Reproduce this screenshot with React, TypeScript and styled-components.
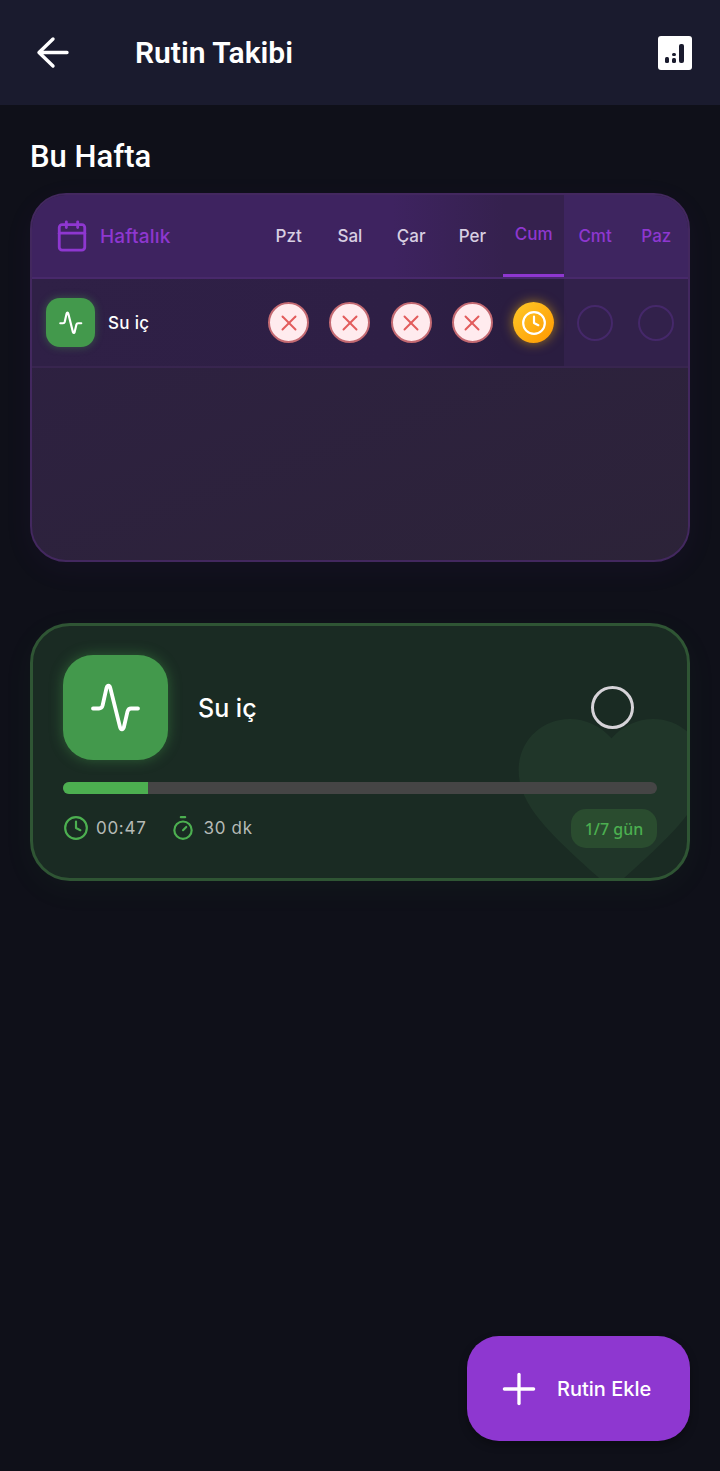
import * as React from 'react';
import styled, { createGlobalStyle } from 'styled-components';
import { Calendar, Clock, Plus, Timer, X } from 'lucide-react';

const GlobalStyle = createGlobalStyle`
  html, body { margin: 0; padding: 0; background: #0f1019; }
  * { box-sizing: border-box; }
`;

const Page = styled.div`
  position: relative;
  min-height: 100vh;
  display: flex;
  flex-direction: column;
  background: #0f1019;
  font-family: Inter, 'Liberation Sans', sans-serif;
  color: #fff;
  overflow: hidden;
`;

const Header = styled.header`
  height: 105px;
  flex-shrink: 0;
  display: flex;
  align-items: center;
  padding: 0 28px 0 36px;
  background: #1a1b2e;
`;

const BackButton = styled.div`
  width: 33px;
  height: 33px;
  display: flex;
  margin-right: 66px;
`;

const Title = styled.h1`
  flex: 1;
  margin: 0;
  font: 600 30px Roboto, sans-serif;
`;

const Main = styled.main`
  padding: 33px 30px 0;
`;

const SectionTitle = styled.h2`
  margin: 0 0 18px;
  height: 37px;
  font: 500 31px/37px Roboto, sans-serif;
`;

const WeekCard = styled.section`
  height: 369px;
  border: 2px solid #43285f;
  border-radius: 36px;
  overflow: hidden;
  background: linear-gradient(160deg, #2e2044 0%, #2c2338 100%);
  box-shadow: 0 8px 32px rgba(142, 55, 208, 0.05);
`;

// the stop at 81.1% is the right edge of today's column
const WeekGrid = styled.div<{ $head?: boolean }>`
  display: grid;
  grid-template-columns: 1fr repeat(7, 61.3px);
  padding-right: 1px;
  height: ${p => (p.$head ? '84px' : '89px')};
  background: ${p =>
    p.$head
      ? 'linear-gradient(90deg, #3e2360 0%, #3e2360 55%, #35214e 72%, #35214e 81.1%, #3e2560 81.1%)'
      : 'linear-gradient(90deg, #2f2046 0%, #2e1f45 55%, #2a1d40 72%, #2a1d40 81.1%, #32214b 81.1%)'};
  border-bottom: 2px solid ${p => (p.$head ? '#48296b' : '#38254f')};
`;

const WeekLabel = styled.div`
  display: flex;
  align-items: center;
  gap: 11px;
  padding-left: 23px;
  font-size: 19px;
  font-weight: 500;
  letter-spacing: 0.2px;
  color: #8e37d0;
`;

const RoutineLabel = styled.div`
  display: flex;
  align-items: center;
  gap: 13px;
  padding-left: 14px;
  font-size: 17px;
  font-weight: 500;
  letter-spacing: 0.3px;
`;

const DayHead = styled.div<{ $today?: boolean; $future?: boolean }>`
  display: flex;
  align-items: center;
  justify-content: center;
  font-size: 17px;
  font-weight: 500;
  padding-bottom: ${p => (p.$today ? '1px' : '0')};
  color: ${p => (p.$today || p.$future ? '#8e37d0' : '#d8cfe2')};
  border-bottom: ${p => (p.$today ? '3px solid #8e37d0' : '0')};
`;

const DayCell = styled.div`
  display: flex;
  align-items: center;
  justify-content: center;
`;

const MissedDot = styled.div`
  width: 41px;
  height: 41px;
  border-radius: 50%;
  display: flex;
  align-items: center;
  justify-content: center;
  background: #ffebee;
  border: 2px solid #c46a72;
  color: #e25c5c;
`;

const PendingDot = styled.div`
  width: 41px;
  height: 41px;
  border-radius: 50%;
  display: flex;
  align-items: center;
  justify-content: center;
  background: linear-gradient(135deg, #ffca28, #ff9800);
  box-shadow: 0 0 12px rgba(255, 193, 7, 0.55);
  color: #fff;
`;

const EmptyDot = styled.div`
  width: 36px;
  height: 36px;
  border-radius: 50%;
  border: 2.5px solid #45286a;
`;

const IconTile = styled.div<{ $big?: boolean }>`
  width: ${p => (p.$big ? '105px' : '49px')};
  height: ${p => (p.$big ? '105px' : '49px')};
  border-radius: ${p => (p.$big ? '30px' : '14px')};
  flex-shrink: 0;
  display: flex;
  align-items: center;
  justify-content: center;
  background: #43994c;
  box-shadow: 0 0 ${p => (p.$big ? '14px' : '8px')} rgba(76, 175, 80, 0.4);
`;

const RoutineCard = styled.section`
  position: relative;
  margin-top: 61px;
  height: 258px;
  padding: 29px 30px 0;
  border: 3px solid #2f5534;
  border-radius: 40px;
  overflow: hidden;
  background: #1a2b23;
  box-shadow: 0 8px 32px rgba(76, 175, 80, 0.05);
`;

const HeartMark = styled.svg`
  position: absolute;
  left: 467px;
  top: 65px;
  width: 223px;
  height: 223px;
  color: #203629;
`;

const RoutineTop = styled.div`
  position: relative;
  display: flex;
  align-items: center;
  height: 105px;
`;

const RoutineName = styled.div`
  flex: 1;
  margin-left: 30px;
  font-size: 25px;
  font-weight: 500;
`;

const StatusRing = styled.div`
  width: 43px;
  height: 43px;
  margin-right: 23px;
  border: 3px solid #d6d3d8;
  border-radius: 50%;
`;

const Track = styled.div`
  position: relative;
  height: 12px;
  margin-top: 22px;
  border-radius: 6px;
  overflow: hidden;
  background: #454545;
`;

const Fill = styled.div`
  height: 100%;
  background: #4caf50;
`;

const StatsRow = styled.div`
  position: relative;
  display: flex;
  align-items: center;
  margin-top: 15px;
  height: 39px;
`;

const Stat = styled.div`
  display: flex;
  align-items: center;
  gap: 7px;
  margin-right: 24px;
  padding-bottom: 1px;
  font-size: 17px;
  letter-spacing: 0.7px;
  color: #b5bab6;
  svg { color: #4caf50; }
`;

const Badge = styled.div`
  margin-left: auto;
  width: 86px;
  height: 39px;
  display: flex;
  align-items: center;
  justify-content: center;
  border-radius: 15px;
  background: #2a4c2f;
  color: #4caf50;
  font: 500 16px 'Noto Sans', sans-serif;
`;

const Fab = styled.button`
  position: absolute;
  right: 30px;
  bottom: 30px;
  width: 223px;
  height: 105px;
  display: flex;
  align-items: center;
  gap: 13px;
  padding: 0 0 0 27px;
  border: 0;
  border-radius: 32px;
  background: #8e37d0;
  color: #fff;
  font-family: Inter, sans-serif;
  font-size: 20px;
  font-weight: 500;
  box-shadow: 0 4px 8px rgba(0, 0, 0, 0.3);
`;

function Pulse({ size, weight }: { size: number; weight: number }) {
  return (
    <svg width={size} height={size} viewBox="0 0 60 60" fill="none" stroke="#fff" strokeWidth={weight} strokeLinecap="round" strokeLinejoin="round">
      <path d="M7 30.5h6c2 0 3-1 3.6-3L20.5 10c.9-3 3-3 3.8 0L34 49c.8 3 3 3 3.8.5l3.7-16c.6-2 1.6-3 3.5-3H52" />
    </svg>
  );
}

function StatsIcon() {
  return (
    <svg width="34" height="34" viewBox="0 0 34 34">
      <rect width="34" height="34" rx="3" fill="#fff" />
      <rect x="7" y="21" width="4" height="6" rx="1.5" fill="#1a1b2e" />
      <rect x="14" y="17" width="4" height="3" rx="1.5" fill="#1a1b2e" />
      <rect x="14" y="22" width="4" height="5" rx="1.5" fill="#1a1b2e" />
      <rect x="21" y="8" width="5" height="19" rx="2" fill="#1a1b2e" />
    </svg>
  );
}

const DAYS = ['Pzt', 'Sal', 'Çar', 'Per', 'Cum', 'Cmt', 'Paz'];
const TODAY = 4;

export default function App() {
  return (
    <Page>
      <GlobalStyle />
      <Header>
        <BackButton>
          <svg width="33" height="33" viewBox="0 0 33 33" fill="none" stroke="#fff" strokeWidth={3.4} strokeLinecap="round" strokeLinejoin="round">
            <path d="M31 16.5H3M17 3L3 16.5 17 30" />
          </svg>
        </BackButton>
        <Title>Rutin Takibi</Title>
        <StatsIcon />
      </Header>

      <Main>
        <SectionTitle>Bu Hafta</SectionTitle>

        <WeekCard>
          <WeekGrid $head>
            <WeekLabel>
              <Calendar size={34} strokeWidth={2} />
              Haftalık
            </WeekLabel>
            {DAYS.map((d, i) => (
              <DayHead key={d} $today={i === TODAY} $future={i > TODAY}>
                {d}
              </DayHead>
            ))}
          </WeekGrid>
          <WeekGrid>
            <RoutineLabel>
              <IconTile>
                <Pulse size={28} weight={4.6} />
              </IconTile>
              Su iç
            </RoutineLabel>
            {DAYS.map((d, i) => (
              <DayCell key={d}>
                {i < TODAY && (
                  <MissedDot>
                    <X size={26} strokeWidth={1.8} />
                  </MissedDot>
                )}
                {i === TODAY && (
                  <PendingDot>
                    <Clock size={26} strokeWidth={2} />
                  </PendingDot>
                )}
                {i > TODAY && <EmptyDot />}
              </DayCell>
            ))}
          </WeekGrid>
        </WeekCard>

        <RoutineCard>
          <HeartMark viewBox="0 0 24 24">
            <path fill="currentColor" d="M12 21.35l-1.45-1.32C5.4 15.36 2 12.28 2 8.5 2 5.42 4.42 3 7.5 3c1.74 0 3.41.81 4.5 2.09C13.09 3.81 14.76 3 16.5 3 19.58 3 22 5.42 22 8.5c0 3.78-3.4 6.86-8.55 11.54L12 21.35z" />
          </HeartMark>
          <RoutineTop>
            <IconTile $big>
              <Pulse size={60} weight={3.8} />
            </IconTile>
            <RoutineName>Su iç</RoutineName>
            <StatusRing />
          </RoutineTop>
          <Track>
            <Fill style={{ width: `${(1 / 7) * 100}%` }} />
          </Track>
          <StatsRow>
            <Stat>
              <Clock size={26} strokeWidth={2} />
              00:47
            </Stat>
            <Stat>
              <Timer size={26} strokeWidth={2} />
              30 dk
            </Stat>
            <Badge>1/7 gün</Badge>
          </StatsRow>
        </RoutineCard>
      </Main>

      <Fab>
        <Plus size={50} strokeWidth={1.6} />
        Rutin Ekle
      </Fab>
    </Page>
  );
}
